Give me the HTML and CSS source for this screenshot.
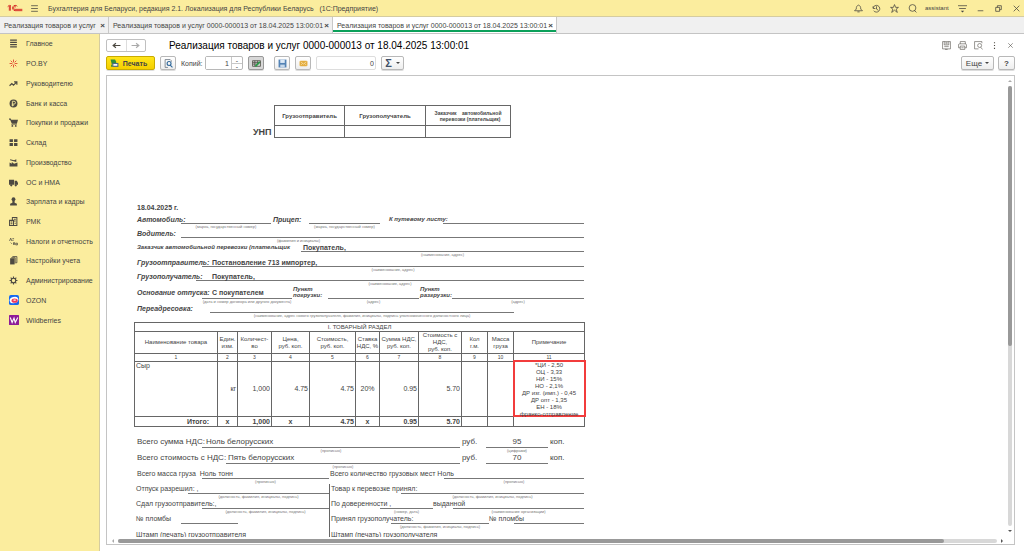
FILE: index.html
```html
<!DOCTYPE html>
<html lang="ru">
<head>
    <meta charset="utf-8">
    <title>Реализация товаров и услуг</title>
    <link rel="stylesheet" href="styles.css">
</head>
<body>
    <header class="titlebar">
        <svg class="logo" viewBox="0 0 48 24" fill="none" stroke="#d8342c" stroke-width="3">
            <path d="M2 8l5-4v16M10 3v17"/>
            <path d="M31 7a8 8 0 1 0-7 13h22"/>
            <path d="M27 10a4 4 0 1 0-3 6h22"/>
        </svg>
        <button class="icon-btn burger" aria-label="Меню">
            <svg viewBox="0 0 16 16" class="line"><path d="M2 3h12M2 8h12M2 13h12"/></svg>
        </button>
        <span class="app-title">Бухгалтерия для Беларуси, редакция 2.1. Локализация для Республики Беларусь &nbsp; (1С:Предприятие)</span>
        <div class="window-tools">
            <button class="icon-btn" aria-label="Уведомления"><svg viewBox="0 0 16 16" class="line"><path d="M1 12h14l-3-3c0-4-1-6-4-7-3 1-4 3-4 7zM6 14h4"/></svg></button>
            <button class="icon-btn" aria-label="История"><svg viewBox="0 0 16 16" class="line"><path d="M2 4v4h4M2 7a6 6 0 1 1 1 5M8 4v5l3 2"/></svg></button>
            <button class="icon-btn" aria-label="Избранное"><svg viewBox="0 0 16 16" class="line"><path d="M8 1l2 5h5l-4 3 2 6-5-4-5 4 2-6-4-3h5z"/></svg></button>
            <button class="icon-btn" aria-label="Поиск"><svg viewBox="0 0 16 16" class="line"><circle cx="8" cy="7" r="6"/><path d="M11 11l4 4"/></svg></button>
            <span class="user">assistant</span>
            <button class="icon-btn" aria-label="Настройки"><svg viewBox="0 0 16 16" class="line"><path d="M0 3h16M2 8h12"/><path d="M5 12h6l-3 3z" fill="#444" stroke="none"/></svg></button>
            <button class="icon-btn" aria-label="Свернуть"><svg viewBox="0 0 16 16" class="line"><path d="M3 12h10"/></svg></button>
            <button class="icon-btn" aria-label="Восстановить"><svg viewBox="0 0 16 16" class="line"><path d="M3 6h7v7H3zM6 6V3h7v7h-3"/></svg></button>
            <button class="icon-btn" aria-label="Закрыть"><svg viewBox="0 0 16 16" class="line"><path d="M3 3l10 10M13 3L3 13"/></svg></button>
        </div>
    </header>

    <div class="tabs">
        <div class="tab tab-short"><a href="#">Реализация товаров и услуг</a><button class="tab-close" aria-label="Закрыть">×</button></div>
        <div class="tab"><a href="#">Реализация товаров и услуг 0000-000013 от 18.04.2025 13:00:01</a><button class="tab-close" aria-label="Закрыть">×</button></div>
        <div class="tab active"><a href="#">Реализация товаров и услуг 0000-000013 от 18.04.2025 13:00:01</a><button class="tab-close" aria-label="Закрыть">×</button></div>
    </div>

    <div class="workspace">
        <nav class="sidebar">
            <div class="menu">
                <a href="#"><svg viewBox="0 0 16 16" class="line"><path d="M2 2h12M2 6h12M2 10h12M2 14h12" stroke-width="2"/></svg>Главное</a>
                <a href="#"><svg class="spark" viewBox="0 0 16 16"><path d="M8 1v5M8 10v5M1 8h5M10 8h5M3 3l3 3M10 10l3 3M13 3l-3 3M6 10l-3 3"/></svg>PO.BY</a>
                <a href="#"><svg viewBox="0 0 16 16" class="line"><path d="M1 12l4-4 3 3 6-6M9 5h5v5" stroke-width="2"/></svg>Руководителю</a>
                <a href="#"><svg viewBox="0 0 16 16"><circle cx="8" cy="8" r="7"/><path d="M6 13V4h3a2 2 0 0 1 0 5H5M5 11h4" fill="none" stroke="#fbed9e" stroke-width="1.5"/></svg>Банк и касса</a>
                <a href="#"><svg viewBox="0 0 16 16"><path d="M0 1h3l1 2h12l-2 7H5L2 3H0z"/><path d="M4 11h10v1H4z"/><circle cx="6" cy="14" r="1.7"/><circle cx="12" cy="14" r="1.7"/></svg>Покупки и продажи</a>
                <a href="#"><svg viewBox="0 0 16 16"><path d="M1 2h6v5H1zM9 2h6v5H9zM1 9h6v5H1zM9 9h6v5H9z"/></svg>Склад</a>
                <a href="#"><svg viewBox="0 0 16 16"><path d="M1 15V8l4 2V7l4 3 6-2v7z"/><path d="M2 2l7 2 4-2v5l-3-1-8-2z"/></svg>Производство</a>
                <a href="#"><svg viewBox="0 0 16 16"><path d="M0 3h9v9H0zM10 5h4l2 4v3h-6z"/><circle cx="4" cy="13" r="2"/><circle cx="12" cy="13" r="2"/></svg>ОС и НМА</a>
                <a href="#"><svg viewBox="0 0 16 16"><circle cx="8" cy="4" r="3.4"/><path d="M6 7h4v3l4 2v3H2v-3l4-2z"/></svg>Зарплата и кадры</a>
                <a href="#"><svg viewBox="0 0 16 16" class="line"><path d="M1 6h7v9H1zM6 6V1h8v14H8M9 4h3M9 7h3M10 11h2M3 9h3M3 12h3" stroke-width="1.8"/></svg>РМК</a>
                <a href="#"><svg viewBox="0 0 16 16" class="line"><path d="M1 7l2-5 2 5M6 3h3M6 6h2M3 10l2 2M8 14v-4h2v4M12 11h3v3h-3z"/></svg>Налоги и отчетность</a>
                <a href="#"><svg viewBox="0 0 16 16"><path d="M2 4h8v11H2z"/><path d="M4 3h7v10M6 1h8v11h-2" fill="none" stroke="#4d4a42" stroke-width="1.5"/></svg>Настройки учета</a>
                <a href="#"><svg viewBox="0 0 16 16" class="line"><circle cx="8" cy="8" r="4" stroke-width="2"/><path d="M8 1v3M8 12v3M1 8h3M12 8h3M3 3l2 2M11 11l2 2M13 3l-2 2M5 11l-2 2" stroke-width="2"/></svg>Администрирование</a>
                <a href="#"><svg class="brand" viewBox="0 0 16 16"><rect width="16" height="16" rx="3" fill="#1668f0"/><ellipse cx="8" cy="8" rx="7" ry="5" fill="#fff" transform="rotate(-15 8 8)"/><ellipse cx="9" cy="9" rx="5" ry="3.4" fill="#ee3a5c"/><ellipse cx="9" cy="8" rx="2.4" ry="1" fill="#fff"/></svg>OZON</a>
                <a href="#"><svg class="brand" viewBox="0 0 16 16"><rect width="16" height="16" rx="1" fill="#8e1c98"/><path d="M2 4l3 8 3-7 2 7 4-8" fill="none" stroke="#fff" stroke-width="1.8"/></svg>Wildberries</a>
            </div>
        </nav>

        <main class="content">
            <div class="page-head">
                <div class="history">
                    <button aria-label="Назад"><svg viewBox="0 0 16 16" class="line"><path d="M15 8H2M7 4L2 8l5 4" stroke-width="2"/></svg></button>
                    <button aria-label="Вперед"><svg viewBox="0 0 16 16" class="line faded"><path d="M1 8h13M9 4l5 4-5 4" stroke-width="2"/></svg></button>
                </div>
                <h1>Реализация товаров и услуг 0000-000013 от 18.04.2025 13:00:01</h1>
                <div class="page-tools">
                    <button class="icon-btn" aria-label="Сохранить"><svg viewBox="0 0 16 16" class="line"><path d="M1 1h14v13H1zM4 1v6h8V1M4 10h8M6 14v1h4M6 3h4M6 5h4"/></svg></button>
                    <button class="icon-btn" aria-label="Печать"><svg viewBox="0 0 16 16" class="line"><path d="M4 5V1h9v4M4 12H1V6l2-1h11l1 2v5h-3M4 9h8v6H4zM6 12h4"/></svg></button>
                    <button class="icon-btn" aria-label="Просмотр"><svg viewBox="0 0 16 16" class="line"><path d="M8 14H1V1h13v3"/><circle cx="10" cy="8" r="3.5"/><path d="M12 11l3 4"/></svg></button>
                    <button class="icon-btn" aria-label="Действия"><svg viewBox="0 0 16 16"><path d="M7 2h2v2H7zM7 7h2v2H7zM7 12h2v2H7z"/></svg></button>
                    <button class="icon-btn" aria-label="Закрыть"><svg viewBox="0 0 16 16" class="line"><path d="M4 4l8 8M12 4l-8 8"/></svg></button>
                </div>
            </div>

            <div class="toolbar">
                <button class="btn print"><svg viewBox="0 0 16 16"><path d="M1 1h8l2 4v4H3z" fill="#2f8f3a"/><path d="M4 7h11v7H4z" fill="#4c6a86"/><path d="M6 9h7v3H6z" fill="#fff"/><path d="M2 9l3 4-3 1z" fill="#2f8f3a"/></svg>Печать</button>
                <button class="btn square" aria-label="Предварительный просмотр"><svg viewBox="0 0 16 16" class="line"><path d="M7 15H2V1h9l2 2v2" stroke="#6a7480"/><circle cx="9" cy="8" r="3.5" stroke="#2d6699" stroke-width="2"/><path d="M11 11l4 4" stroke="#2d6699" stroke-width="2"/></svg></button>
                <label for="copies">Копий:</label>
                <div class="stepper">
                    <input id="copies" type="text" value="1">
                    <div class="steps"><button aria-label="Больше">-</button><button aria-label="Меньше">-</button></div>
                </div>
                <button class="btn square pressed" aria-label="Редактирование"><svg viewBox="0 0 16 16" class="line"><path d="M1 3h14v10H1zM1 6h14M1 9h9M5 3v10M10 3v6"/><path d="M6 13l8-8" stroke="#2c9a48" stroke-width="3"/></svg></button>
                <button class="btn square save" aria-label="Сохранить"><svg viewBox="0 0 16 16"><path d="M1 1h14v14H1z" fill="#5483b5"/><path d="M4 1h8v6H4z" fill="#dce9f6"/><path d="M4 10h8v5H4z" fill="#c7d8ea"/></svg></button>
                <button class="btn square" aria-label="Отправить"><svg viewBox="0 0 16 16"><rect x="1" y="3" width="14" height="10" rx="2" fill="#e3ac3d"/><path d="M3 5l5 4 5-4M3 11l3-3M13 11l-3-3" fill="none" stroke="#fff4d5"/></svg></button>
                <input class="sum" type="text" value="0" aria-label="Сумма">
                <button class="btn sigma">Σ<i class="caret"></i></button>
                <button class="btn more">Еще<i class="caret"></i></button>
                <button class="btn help">?</button>
            </div>

            <div class="viewer">
                <div class="document">
                    <div class="sheet">
                        <div class="unp">
                            <b>УНП</b>
                            <table class="parties">
                                <tr>
                                    <th>Грузоотправитель</th>
                                    <th>Грузополучатель</th>
                                    <th class="payer">Заказчик &nbsp; &nbsp;автомобильной<br>&nbsp; &nbsp;перевозки (плательщик)</th>
                                </tr>
                                <tr><td></td><td></td><td></td></tr>
                            </table>
                        </div>

                        <section class="details">
                            <p class="date">18.04.2025 г.</p>
                            <div class="row car">
                                <span>Автомобиль:</span>
                                <div class="field"><b></b><small>(марка, государственный номер)</small></div>
                                <span>Прицеп:</span>
                                <div class="field"><b></b><small>(марка, государственный номер)</small></div>
                                <span class="minor">К путевому листу:</span>
                                <div class="field"><b></b></div>
                            </div>
                            <div class="row driver">
                                <span>Водитель:</span>
                                <div class="field"><b></b><small>(фамилия и инициалы)</small></div>
                            </div>
                            <div class="row customer">
                                <span>Заказчик автомобильной перевозки (плательщик</span>
                                <div class="field"><b>Покупатель,</b><small>(наименование, адрес)</small></div>
                            </div>
                            <div class="row sender">
                                <span>Грузоотправитель:</span>
                                <div class="field"><b>Постановление 713 импортер,</b><small>(наименование, адрес)</small></div>
                            </div>
                            <div class="row receiver">
                                <span>Грузополучатель:</span>
                                <div class="field"><b>Покупатель,</b><small>(наименование, адрес)</small></div>
                            </div>
                            <div class="row basis">
                                <span>Основание отпуска:</span>
                                <div class="field"><b>С покупателем</b><small>(дата и номер договора или другого документа)</small></div>
                                <span class="minor">Пункт<br>погрузки:</span>
                                <div class="field"><b></b><small>(адрес)</small></div>
                                <span class="minor">Пункт<br>разгрузки:</span>
                                <div class="field"><b></b><small>(адрес)</small></div>
                            </div>
                            <div class="row redirect">
                                <span>Переадресовка:</span>
                                <div class="field"><b></b><small>(наименование, адрес нового грузополучателя, фамилия, инициалы, подпись уполномоченного должностного лица)</small></div>
                            </div>
                        </section>

                        <table class="goods">
                            <colgroup>
                                <col class="c-name"><col class="c-unit"><col class="c-qty"><col class="c-price"><col class="c-cost"><col class="c-rate">
                                <col class="c-vat"><col class="c-total"><col class="c-places"><col class="c-mass"><col class="c-note">
                            </colgroup>
                            <thead>
                                <tr class="caption"><th colspan="11">I. ТОВАРНЫЙ РАЗДЕЛ</th></tr>
                                <tr class="heads">
                                    <th>Наименование товара</th><th>Един.<br>изм.</th><th>Количест-<br>во</th><th>Цена,<br>руб. коп.</th>
                                    <th>Стоимость,<br>руб. коп.</th><th>Ставка<br>НДС, %</th><th>Сумма НДС,<br>руб. коп.</th><th>Стоимость с<br>НДС,<br>руб. коп.</th>
                                    <th>Кол<br>г.м.</th><th>Масса<br>груза</th><th>Примечание</th>
                                </tr>
                                <tr class="numbers"><th>1</th><th>2</th><th>3</th><th>4</th><th>5</th><th>6</th><th>7</th><th>8</th><th>9</th><th>10</th><th>11</th></tr>
                            </thead>
                            <tbody>
                                <tr class="item">
                                    <td class="name">Сыр</td><td>кг</td><td>1,000</td><td>4.75</td><td>4.75</td><td class="mid">20%</td><td>0.95</td><td>5.70</td><td></td><td></td>
                                    <td class="remark"><div>*ЦИ - 2,50<br>ОЦ - 3,33<br>НИ - 15%<br>НО - 2,1%<br>ДР изг. (имп.) - 0,45<br>ДР опт - 1,35<br>ЕН - 18%<br>франко-отправление</div></td>
                                </tr>
                            </tbody>
                            <tfoot>
                                <tr class="total"><td class="label">Итого:</td><td class="mid">х</td><td>1,000</td><td class="mid">х</td><td>4.75</td><td class="mid">х</td><td>0.95</td><td>5.70</td><td></td><td></td><td></td></tr>
                            </tfoot>
                        </table>

                        <section class="summary">
                            <div class="row vat">
                                <span>Всего сумма НДС:</span>
                                <div class="field"><b>Ноль белорусских</b><small>(прописью)</small></div>
                                <span>руб.</span>
                                <div class="field mid"><b>95</b><small>(цифрами)</small></div>
                                <span>коп.</span>
                            </div>
                            <div class="row vat cost">
                                <span>Всего стоимость с НДС:</span>
                                <div class="field"><b>Пять белорусских</b><small>(прописью)</small></div>
                                <span>руб.</span>
                                <div class="field mid"><b>70</b></div>
                                <span>коп.</span>
                            </div>
                            <div class="row mass">
                                <span>Всего масса груза &nbsp;Ноль тонн</span>
                                <div class="field"><b></b><small>(прописью)</small></div>
                                <span>Всего количество грузовых мест Ноль</span>
                                <div class="field"><b></b><small>(прописью)</small></div>
                            </div>
                        </section>

                        <section class="signatures">
                            <div class="side">
                                <div class="row release">
                                    <span>Отпуск разрешил: ,</span>
                                    <div class="field"><b></b><small>(должность, фамилия, инициалы, подпись)</small></div>
                                </div>
                                <div class="row handed">
                                    <span>Сдал грузоотправитель:,</span>
                                    <div class="field"><b></b><small>(должность, фамилия, инициалы, подпись)</small></div>
                                </div>
                                <div class="row seal">
                                    <span>№ пломбы</span>
                                    <div class="field"><b></b></div>
                                </div>
                                <div class="row"><span>Штамп (печать) грузоотправителя</span></div>
                            </div>
                            <div class="side right">
                                <div class="row release">
                                    <span>Товар к перевозке принял:</span>
                                    <div class="field"><b></b><small>(должность, фамилия, инициалы, подпись)</small></div>
                                </div>
                                <div class="row handed">
                                    <span>По доверенности ,</span>
                                    <div class="field"><b></b><small>(номер, дата)</small></div>
                                    <span>выданной</span>
                                    <div class="field"><b></b><small>(наименование организации)</small></div>
                                </div>
                                <div class="row seal">
                                    <span>Принял грузополучатель:</span>
                                    <div class="field"><b></b><small>(должность, фамилия, инициалы, подпись)</small></div>
                                    <span>№ пломбы</span>
                                    <div class="field"><b></b></div>
                                </div>
                                <div class="row"><span>Штамп (печать) грузополучателя</span></div>
                            </div>
                        </section>
                    </div>
                </div>
                <div class="vscroll"><i class="arrow up"></i><div class="track"><div class="thumb"></div></div><i class="arrow down"></i></div>
                <div class="hscroll"><i class="arrow left"></i><div class="track"><div class="thumb"></div></div><i class="arrow right"></i></div>
            </div>
        </main>
    </div>
</body>
</html>
```

FILE: styles.css
```css
* {
    box-sizing: border-box;
}

body {
    margin: 0;
    height: 100vh;
    display: flex;
    flex-direction: column;
    overflow: hidden;
    background: #fff;
    color: #444;
    font-family: "Liberation Sans", Arial, sans-serif;
    font-size: 7px;
}

a {
    color: inherit;
    text-decoration: none;
}

button, input {
    font: inherit;
    color: inherit;
    margin: 0;
    padding: 0;
}

svg {
    display: block;
    width: 9px;
    height: 9px;
    flex: none;
    fill: #4d4a42;
}

svg.line {
    fill: none;
    stroke: #4d4a42;
    stroke-width: 1.4;
}

svg.faded {
    stroke: #aaa;
}

svg.spark {
    fill: none;
    stroke: #e0452f;
    stroke-width: 1.6;
}

.icon-btn {
    border: 0;
    background: none;
    width: 10px;
    display: flex;
    justify-content: center;
}

/* title bar */
.titlebar {
    flex: none;
    display: flex;
    align-items: center;
    height: 17px;
    padding: 0 3px 0 7px;
    background: #fbed9e;
    border-bottom: 1px solid #d5cca0;
}

.titlebar .logo {
    width: 16px;
    height: 8px;
    fill: none;
}

.burger {
    margin: 0 9px 0 6px;
}

.window-tools {
    margin-left: auto;
    display: flex;
    align-items: center;
    gap: 8px;
}

.user {
    font-size: 6px;
    width: 24px;
}

/* tabs */
.tabs {
    flex: none;
    display: flex;
    height: 17px;
    background: #f0f0f0;
    border-bottom: 1px solid #c4c4c4;
}

.tab {
    display: flex;
    align-items: center;
    justify-content: space-between;
    width: 224px;
    padding: 0 3px 0 4px;
    border-right: 1px solid #c8c8c8;
    white-space: nowrap;
}

.tab-short {
    width: 109px;
}

.tab.active {
    background: #fff;
    box-shadow: inset 0 -1px #fff, inset 0 -3px #0ba05a;
}

.tab-close {
    border: 0;
    background: none;
    font-size: 8px;
    font-weight: bold;
}

/* left menu */
.workspace {
    flex: 1;
    min-height: 0;
    display: flex;
}

.sidebar {
    flex: none;
    width: 100px;
    background: #fbed9e;
    border-right: 1px solid #d5cca0;
}

.menu {
    display: flex;
    flex-direction: column;
    height: 296px;
}

.menu a {
    flex: 1;
    display: flex;
    align-items: center;
    gap: 8px;
    padding-left: 9px;
    white-space: nowrap;
}

.menu .brand {
    width: 10px;
    height: 10px;
    margin-right: -1px;
}

/* page header */
.content {
    flex: 1;
    min-width: 0;
    display: flex;
    flex-direction: column;
    padding: 4px 9px 6px 6px;
}

.page-head {
    display: flex;
    align-items: center;
    height: 14px;
}

.history {
    display: flex;
    width: 40px;
    height: 13px;
    border: 1px solid #c0c0c0;
    border-radius: 2px;
}

.history button {
    flex: 1;
    display: flex;
    align-items: center;
    justify-content: center;
    border: 0;
    background: none;
}

.history button + button {
    border-left: 1px solid #ddd;
}

h1 {
    margin: 0 0 0 23px;
    font-size: 10px;
    font-weight: normal;
    color: #000;
    white-space: nowrap;
}

.page-tools {
    display: flex;
    gap: 6px;
    margin-left: auto;
}

.page-tools svg {
    stroke-width: 1;
}

/* toolbar */
.toolbar {
    display: flex;
    align-items: center;
    height: 14px;
    margin: 4px 0 5px;
}

.btn {
    display: flex;
    align-items: center;
    justify-content: center;
    height: 14px;
    border: 1px solid #b8b8b8;
    border-radius: 2px;
    background: linear-gradient(#fff, #eee);
    box-shadow: 0 1px #ddd;
}

.print {
    width: 49px;
    gap: 4px;
    padding-right: 4px;
    background: linear-gradient(#ffe51a, #f5cf00);
    border-color: #c9ab00;
    font-weight: bold;
}

.square {
    width: 16px;
    margin-left: 5px;
}

.pressed {
    background: #d8d8d8;
    border-color: #999;
}

.save {
    margin-left: 10px;
}

.toolbar label {
    margin: 0 3px 0 5px;
    width: 21px;
    white-space: nowrap;
}

.stepper {
    display: flex;
    width: 38px;
    height: 14px;
    border: 1px solid #b8b8b8;
    border-radius: 2px;
}

.stepper input {
    flex: 1;
    min-width: 0;
    border: 0;
    text-align: right;
    padding-right: 2px;
}

.steps {
    width: 11px;
    display: grid;
    grid-template-rows: 1fr 1fr;
    border-left: 1px solid #c8c8c8;
}

.steps button {
    border: 0;
    background: none;
    line-height: 5px;
}

.steps button + button {
    border-top: 1px solid #c8c8c8;
}

.sum {
    width: 60px;
    height: 14px;
    margin-left: 5px;
    padding-right: 1px;
    text-align: right;
    border: 1px solid #ddd;
    border-radius: 2px;
}

.sigma {
    width: 23px;
    margin-left: 5px;
    gap: 4px;
    font-size: 11px;
    font-weight: bold;
    color: #3f5068;
}

.caret {
    border: 2px solid transparent;
    border-top-color: #444;
    border-bottom: 0;
}

.more {
    width: 33px;
    margin-left: auto;
    gap: 3px;
    font-size: 8px;
}

.help {
    width: 17px;
    margin-left: 4px;
    font-size: 8px;
    font-weight: bold;
}

/* document viewer */
.viewer {
    flex: 1;
    min-height: 0;
    display: grid;
    grid-template-columns: 1fr 8px;
    grid-template-rows: 1fr 7px;
    border: 1px solid #c4c4c4;
}

.document {
    overflow: hidden;
    min-height: 0;
}

.sheet {
    width: 451px;
    margin-left: 27px;
    padding-top: 29px;
}

.vscroll {
    display: flex;
    flex-direction: column;
    align-items: center;
    padding: 4px 2px 5px;
    gap: 4px;
}

.hscroll {
    grid-column: 1;
    display: flex;
    align-items: center;
    padding: 0 3px 0 5px;
    gap: 4px;
}

.track {
    flex: 1;
    background: #d8d8d8;
    border-radius: 2px;
}

.thumb {
    background: #999;
    border-radius: 2px;
}

.vscroll .track {
    width: 4px;
}

.vscroll .thumb {
    height: 59%;
}

.hscroll .track {
    height: 4px;
}

.hscroll .thumb {
    width: 94%;
    height: 4px;
}

.arrow {
    border: 2px solid transparent;
}

.arrow.up {
    border-bottom-color: #aaa;
    border-top: 0;
}

.arrow.down {
    border-top-color: #555;
    border-bottom: 0;
}

.arrow.left {
    border-right-color: #aaa;
    border-left: 0;
}

.arrow.right {
    border-left-color: #555;
    border-right: 0;
}

/* tables */
table {
    border-collapse: collapse;
    table-layout: fixed;
}

th, td {
    padding: 0;
    border: 1px solid #666;
}

.unp {
    display: flex;
    align-items: flex-end;
    gap: 2px;
    margin-left: 119px;
}

.unp b {
    width: 19px;
    font-size: 9px;
    line-height: 11px;
}

.parties {
    width: 237px;
    font-size: 6px;
}

.parties tr:first-child {
    height: 20px;
}

.parties tr + tr {
    height: 12px;
}

.parties th {
    width: 70px;
}

.parties th + th {
    width: 81px;
}

.parties .payer {
    width: 85px;
    font-size: 5px;
    line-height: 6px;
}

/* form rows: a label column and an underlined field with a hint below */
.details {
    padding: 64px 1px 0 3px;
    font-weight: bold;
}

.date {
    margin: 0;
    line-height: 12px;
}

.row {
    display: grid;
    height: 14px;
    line-height: 11px;
    white-space: nowrap;
}

.row span {
    min-width: 0;
}

.details span {
    font-style: italic;
}

.details .minor {
    font-size: 6px;
}

.field {
    min-width: 0;
}

.field b {
    display: block;
    height: 10px;
    border-bottom: 1px solid #777;
    overflow: visible;
}

.field small {
    display: flex;
    justify-content: center;
    font-size: 4px;
    font-weight: normal;
    line-height: 5px;
    color: #777;
}

.car {
    grid-template-columns: 44px 90px 38px 71px 63px 1fr;
}

.car span + .field + span {
    padding-left: 2px;
}

.car .field + .minor.minor {
    padding-left: 9px;
}

.driver {
    grid-template-columns: 44px 1fr;
}

.driver small {
    margin-right: 168px;
}

.customer {
    grid-template-columns: 164px 1fr;
    height: 15px;
}

.customer span {
    font-size: 6px;
}

.customer b {
    padding-left: 2px;
}

.sender {
    grid-template-columns: 65px 1fr;
}

.sender b {
    padding-left: 10px;
}

.receiver {
    grid-template-columns: 59px 1fr;
    height: 15px;
}

.receiver b {
    padding-left: 16px;
}

.basis {
    grid-template-columns: 65px 90px 36px 91px 33px 1fr;
    height: 17px;
    line-height: 13px;
}

.basis b {
    height: 13px;
    padding-left: 10px;
}

.basis .minor {
    padding-left: 1px;
    line-height: 6px;
}

.redirect {
    grid-template-columns: 73px 304px;
    height: 19px;
}

/* goods */
.goods {
    width: 451px;
    font-size: 6px;
}

.goods th {
    font-weight: normal;
    line-height: 7px;
}

.goods td {
    font-size: 7px;
    text-align: right;
    padding-right: 1px;
}

.goods .mid {
    text-align: center;
    padding: 0;
}

.goods .name {
    text-align: left;
    vertical-align: top;
    padding-left: 1px;
}

.goods .label {
    padding-right: 8px;
}

.goods .remark {
    font-size: 6px;
    line-height: 7px;
    text-align: center;
    padding: 0;
    border: 2px solid #f23c3c;
}

/* the last line runs onto the frame */
.remark div {
    height: 53px;
}

.caption { height: 9px; }
.heads { height: 22px; }
.numbers { height: 7px; }
.goods .numbers th {
    font-size: 5px;
    line-height: 6px;
}
.item { height: 55px; }
.total {
    height: 10px;
    font-weight: bold;
}

.c-name { width: 83px; }
.c-unit { width: 20px; }
.c-qty { width: 34px; }
.c-price { width: 38px; }
.c-cost { width: 46px; }
.c-rate { width: 24px; }
.c-vat { width: 39px; }
.c-total { width: 43px; }
.c-places { width: 26px; }
.c-mass { width: 26px; }
.c-note { width: 71px; }

/* totals and signatures */
.summary {
    padding: 9px 1px 0 3px;
}

.summary b, .signatures b {
    font-weight: normal;
}

.vat {
    grid-template-columns: 65px 1fr 26px 62px 36px;
    height: 16px;
    font-size: 8px;
    line-height: 11px;
}

.cost {
    grid-template-columns: 89px 1fr 26px 62px 36px;
    height: 17px;
}

.vat b {
    height: 12px;
    padding-left: 4px;
}

.cost b {
    padding-left: 2px;
}

.vat .mid b {
    padding: 0;
    text-align: center;
}

.vat .field + span {
    padding-left: 2px;
}

.mass {
    grid-template-columns: 65px 127px 115px 1fr;
    height: 15px;
    line-height: 10px;
}

.mass .field + span {
    padding-left: 1px;
}

.signatures {
    display: grid;
    grid-template-columns: 194px 1fr;
    padding: 0 1px 0 1px;
}

.side {
    padding-left: 1px;
}

.side.right {
    border-left: 1px solid #666;
}

.side .row {
    height: 15px;
    line-height: 10px;
}

.side .seal {
    height: 16px;
}

.release { grid-template-columns: 52px 1fr; }
.handed { grid-template-columns: 66px 1fr; }
.seal { grid-template-columns: 45px 57px; }
.right .release { grid-template-columns: 70px 1fr; }
.right .handed { grid-template-columns: 49px 53px 20px 1fr; }
.right .seal { grid-template-columns: 60px 98px 25px 1fr; }
```
